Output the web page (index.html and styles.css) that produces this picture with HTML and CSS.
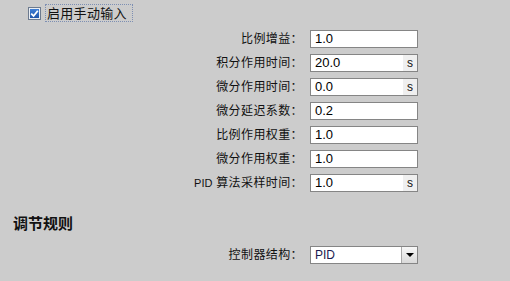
FILE: index.html
```html
<!DOCTYPE html>
<html lang="zh-CN">
<head>
  <meta charset="UTF-8" />
  <title>PID 参数</title>
  <link rel="stylesheet" href="styles.css">
</head>
<body>
  <div class="panel">
    <div class="check-row">
      <span class="checkbox">
        <span class="tick">
          <svg width="9" height="9" viewBox="0 0 9 9"><path d="M1.2 4.6 L3.6 7 L7.8 1.8" fill="none" stroke="#fff" stroke-width="1.8"/></svg>
        </span>
      </span>
      <span class="check-label">启用手动输入</span>
    </div>

    <div class="params">
      <label>比例增益：</label>
      <div class="field"><span class="value">1.0</span></div>

      <label>积分作用时间：</label>
      <div class="field"><span class="value">20.0</span><span class="unit">s</span></div>

      <label>微分作用时间：</label>
      <div class="field"><span class="value">0.0</span><span class="unit">s</span></div>

      <label>微分延迟系数：</label>
      <div class="field"><span class="value">0.2</span></div>

      <label>比例作用权重：</label>
      <div class="field"><span class="value">1.0</span></div>

      <label>微分作用权重：</label>
      <div class="field"><span class="value">1.0</span></div>

      <label><span class="latin">PID</span> 算法采样时间：</label>
      <div class="field"><span class="value">1.0</span><span class="unit">s</span></div>
    </div>

    <h3 class="section">调节规则</h3>

    <div class="params">
      <label>控制器结构：</label>
      <div class="field select">
        <span class="value">PID</span>
        <span class="drop"><span class="arrow"></span></span>
      </div>
    </div>
  </div>
</body>
</html>
```

FILE: styles.css
```css
body {
  margin: 0;
  background-color: #cccccc;
  color: #111;
  font-family: "Liberation Sans", "Noto Sans CJK SC", sans-serif;
  font-size: 12px;
  height: 281px;
  overflow: hidden;
}

.panel {
  padding-top: 4px;
}

.check-row {
  display: flex;
  align-items: center;
  padding-left: 28px;
  height: 18px;
}

.checkbox {
  box-sizing: border-box;
  width: 13px;
  height: 13px;
  border: 1px solid #6c7a8e;
  background: #e9eef5;
  display: flex;
  align-items: center;
  justify-content: center;
}

.tick {
  width: 9px;
  height: 9px;
  background: linear-gradient(#3f7fd6, #1f55aa);
  display: flex;
}

.check-label {
  margin-left: 4px;
  padding: 0 5px 0 1px;
  height: 16px;
  line-height: 16px;
  border: 1px dotted #7d8fb3;
  font-family: "Noto Sans CJK SC", sans-serif;
  font-size: 13px;
  letter-spacing: 0.3px;
}

.params {
  display: grid;
  grid-template-columns: 303px 108px;
  column-gap: 7px;
  row-gap: 6px;
  margin-top: 8px;
}

.params label {
  text-align: right;
  align-self: center;
  line-height: 18px;
  font-size: 12px;
  letter-spacing: 0.4px;
}

.latin {
  font-size: 11px;
  letter-spacing: 0;
}

.field {
  box-sizing: border-box;
  height: 18px;
  border: 1px solid #858585;
  background: #fff;
  display: flex;
}

.value {
  flex: 1;
  padding-left: 4px;
  line-height: 16px;
  font-size: 13px;
  color: #000;
}

.unit {
  width: 14px;
  background: #efefef;
  text-align: center;
  line-height: 16px;
  font-size: 12px;
}

.section {
  margin: 21px 0 0 13px;
  font-family: "Noto Sans CJK SC", sans-serif;
  font-size: 15px;
  font-weight: bold;
  line-height: 20px;
}

.section + .params {
  margin-top: 13px;
}

.select .value {
  color: #1a1a50;
  font-size: 12px;
}

.drop {
  width: 15px;
  border-left: 1px solid #a9a9a9;
  background: linear-gradient(#f7f7f7, #d9d9d9);
  display: flex;
  align-items: center;
  justify-content: center;
}

.arrow {
  width: 0;
  height: 0;
  border-left: 4px solid transparent;
  border-right: 4px solid transparent;
  border-top: 4px solid #000;
}
```
